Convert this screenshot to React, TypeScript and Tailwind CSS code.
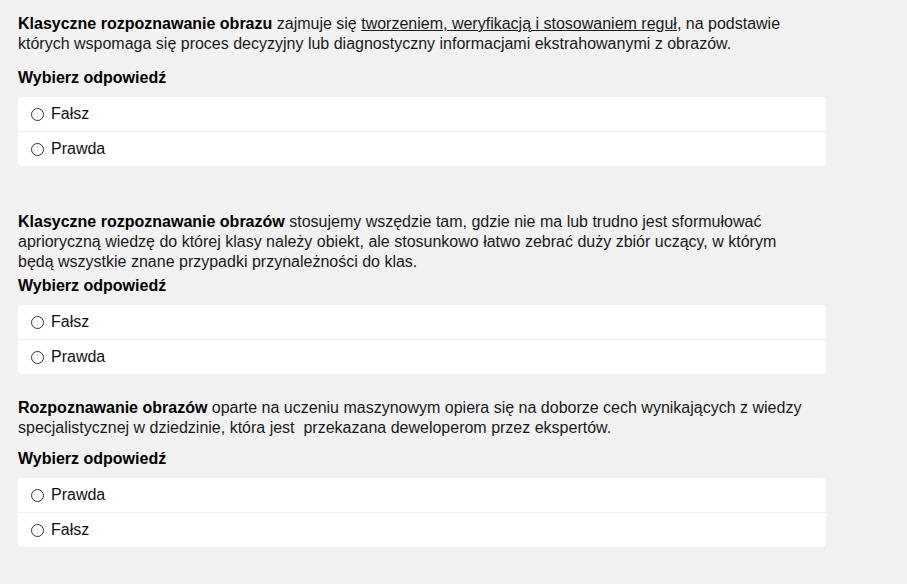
function Option({ label }: { label: string }) {
    return (
        <label className="flex items-center h-[34px] pl-[13px] gap-[7px] text-[16px] text-[#111]">
            <span className="w-[13px] h-[13px] rounded-full border border-[#333] bg-white" />
            <span>{label}</span>
        </label>
    )
}

function Answers({ options }: { options: string[] }) {
    return (
        <div className="mt-[9px] w-[808px] bg-white rounded-[4px] flex flex-col">
            <Option label={options[0]} />
            <div className="h-px bg-[#efefef]" />
            <Option label={options[1]} />
        </div>
    )
}

function Heading({ className }: { className: string }) {
    return <h3 className={"font-bold text-[16px] leading-[20px] text-black " + className}>Wybierz odpowiedź</h3>
}

export default function App() {
    return (
        <div className="min-h-[584px] w-full bg-[#f1f1f1] pl-[18px] pt-[14px] font-['Liberation_Sans',Arial,sans-serif]">
            {/* Question 1 */}
            <p className="text-[16px] leading-[20px] text-[#1a1a1a] whitespace-nowrap">
                <b className="text-black">Klasyczne rozpoznawanie obrazu</b> zajmuje się <span className="underline">tworzeniem, weryfikacją i stosowaniem reguł</span>, na podstawie<br />
                których wspomaga się proces decyzyjny lub diagnostyczny informacjami ekstrahowanymi z obrazów.
            </p>
            <Heading className="mt-[14px]" />
            <Answers options={["Fałsz", "Prawda"]} />

            {/* Question 2 */}
            <p className="mt-[46px] text-[16px] leading-[20px] text-[#1a1a1a] whitespace-nowrap">
                <b className="text-black">Klasyczne rozpoznawanie obrazów</b> stosujemy wszędzie tam, gdzie nie ma lub trudno jest sformułować<br />
                aprioryczną wiedzę do której klasy należy obiekt, ale stosunkowo łatwo zebrać duży zbiór uczący, w którym<br />
                będą wszystkie znane przypadki przynależności do klas.
            </p>
            <Heading className="mt-[4px]" />
            <Answers options={["Fałsz", "Prawda"]} />

            {/* Question 3 */}
            <p className="mt-[24px] text-[16px] leading-[20px] text-[#1a1a1a] whitespace-nowrap">
                <b className="text-black">Rozpoznawanie obrazów</b> oparte na uczeniu maszynowym opiera się na doborze cech wynikających z wiedzy<br />
                specjalistycznej w dziedzinie, która jest{"\u00a0"} przekazana deweloperom przez ekspertów.
            </p>
            <Heading className="mt-[11px]" />
            <Answers options={["Prawda", "Fałsz"]} />
        </div>
    )
}
